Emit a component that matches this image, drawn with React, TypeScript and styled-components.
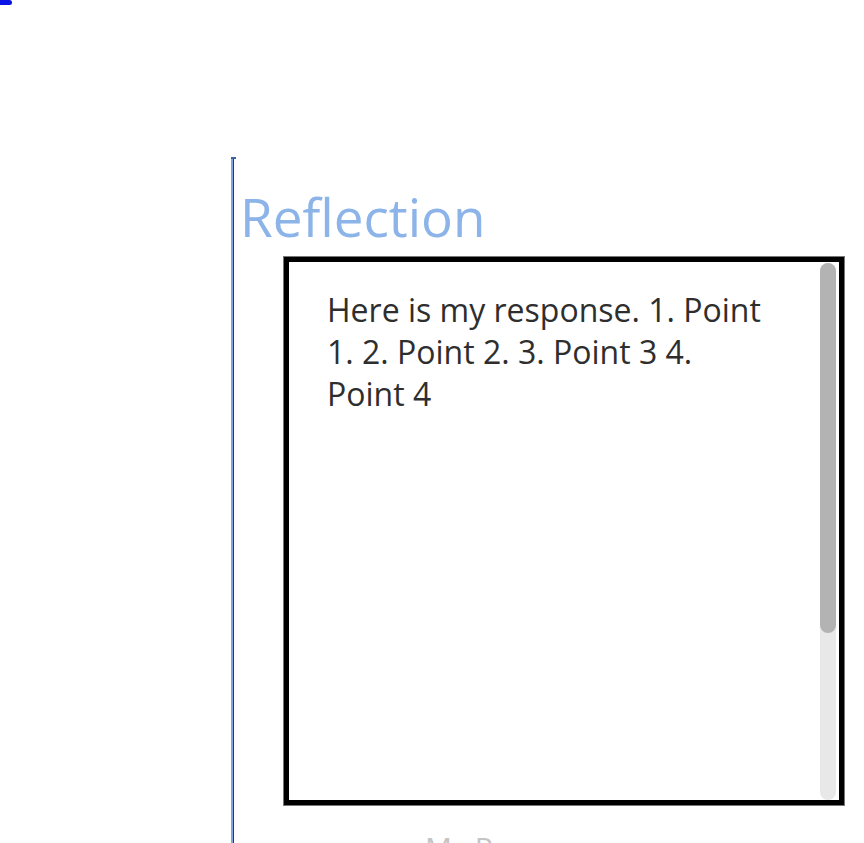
import React from "react";
import styled, { createGlobalStyle } from "styled-components";

const Global = createGlobalStyle`
  html, body { margin: 0; padding: 0; background: #fff; }
  body { font-family: "Open Sans", "Noto Sans", sans-serif; overflow: hidden; }
`;

const Page = styled.div`
  width: 864px;
  height: 843px;
  overflow: hidden;
  display: flex;
  flex-direction: column;
`;

const TopLink = styled.a`
  display: block;
  flex-shrink: 0;
  width: 12px;
  height: 5px;
  background: #0b14e6;
  border-radius: 0 3px 3px 0;
`;

const Section = styled.section`
  position: relative;
  flex-shrink: 0;
  margin: 152px 0 0 231px;
  padding: 0 0 0 8px;
  border-left: 2px solid #7ea6de;
  box-shadow: inset 1px 0 0 #1d3c6b;
  &::before {
    content: "";
    position: absolute;
    left: -2px;
    top: 0;
    width: 5px;
    height: 2px;
    background: #3c64a0;
  }
`;

const Heading = styled.h2`
  margin: 25px 0 0 -1px;
  font-family: "Open Sans", sans-serif;
  font-weight: 400;
  font-size: 53px;
  line-height: 70px;
  color: #8cb4e8;
`;

const Box = styled.div`
  display: flex;
  margin: 5px 0 0 43px;
  width: 550px;
  height: 538px;
  border: 5px solid #000;
  box-shadow: 0 0 0 1px #777;
  overflow: hidden;
`;

const Response = styled.div`
  flex: 1;
  min-width: 0;
  padding: 27px 52px 0 38px;
  font-family: "Open Sans", sans-serif;
  font-size: 32px;
  line-height: 42px;
  color: #2e2e2e;
`;

const ScrollTrack = styled.div`
  flex-shrink: 0;
  width: 16px;
  margin: 1px 3px 0 1px;
  background: #e8e8e8;
  border-radius: 8px;
  display: flex;
  flex-direction: column;
`;

const ScrollThumb = styled.div`
  height: 370px;
  background: #b3b3b3;
  border-radius: 8px;
`;

const Caption = styled.div`
  margin: 23px 0 0 184px;
  font-family: "Open Sans", sans-serif;
  font-size: 30px;
  line-height: 40px;
  color: #c4c4c4;
`;

export default function App() {
  return (
    <Page>
      <Global />
      <TopLink href="#" aria-label="link" />
      <Section>
        <Heading>Reflection</Heading>
        <Box>
          <Response>Here is my response. 1. Point 1. 2. Point 2. 3. Point 3 4. Point 4</Response>
          <ScrollTrack>
            <ScrollThumb />
          </ScrollTrack>
        </Box>
        <Caption>My Response</Caption>
      </Section>
    </Page>
  );
}
